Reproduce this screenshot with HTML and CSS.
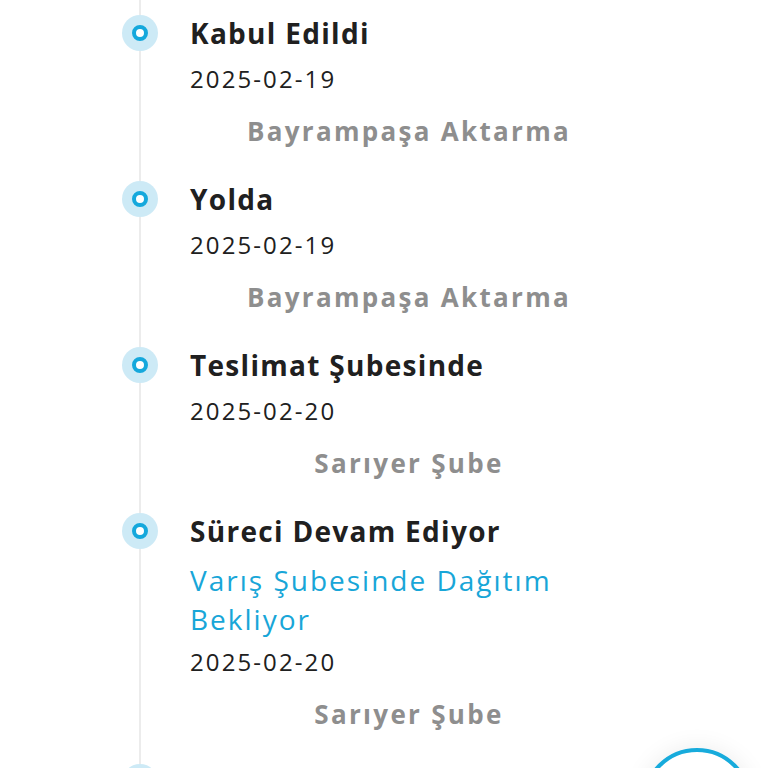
FILE: index.html
```html
<!DOCTYPE html>
<html lang="tr">
<head>
<meta charset="utf-8">
<title>Kargo Takip</title>
<link rel="stylesheet" href="styles.css">
</head>
<body>
<ul class="timeline">
  <li class="event">
    <span class="dot"></span>
    <div class="body">
      <h3 class="title">Kabul Edildi</h3>
      <p class="date">2025-02-19</p>
      <p class="place">Bayrampaşa Aktarma</p>
    </div>
  </li>
  <li class="event">
    <span class="dot"></span>
    <div class="body">
      <h3 class="title">Yolda</h3>
      <p class="date">2025-02-19</p>
      <p class="place">Bayrampaşa Aktarma</p>
    </div>
  </li>
  <li class="event">
    <span class="dot"></span>
    <div class="body">
      <h3 class="title">Teslimat Şubesinde</h3>
      <p class="date">2025-02-20</p>
      <p class="place">Sarıyer Şube</p>
    </div>
  </li>
  <li class="event">
    <span class="dot"></span>
    <div class="body">
      <h3 class="title">Süreci Devam Ediyor</h3>
      <p class="note">Varış Şubesinde Dağıtım Bekliyor</p>
      <p class="date">2025-02-20</p>
      <p class="place">Sarıyer Şube</p>
    </div>
  </li>
  <li class="event">
    <span class="dot"></span>
    <div class="body">
      <h3 class="title">Teslim Edildi</h3>
      <p class="date">2025-02-21</p>
      <p class="place">Sarıyer Şube</p>
    </div>
  </li>
</ul>
<button class="fab" type="button" aria-label="Destek"></button>
</body>
</html>
```
FILE: styles.css
```css
html, body {
  margin: 0;
  padding: 0;
  background: #ffffff;
  overflow: hidden;
}
body {
  font-family: "Open Sans", "Noto Sans", sans-serif;
  color: #222222;
  height: 768px;
}
.timeline {
  list-style: none;
  margin: 0 0 0 139px;
  padding: 10px 0 0 0;
  border-left: 2px solid #ececec;
}
.event {
  display: flex;
  align-items: flex-start;
  margin-bottom: 22px;
}
.dot {
  flex: none;
  width: 36px;
  height: 36px;
  margin: 5px 0 0 -19px;
  border-radius: 50%;
  background: #cdeaf6;
  display: flex;
  align-items: center;
  justify-content: center;
}
.dot::after {
  content: "";
  width: 8px;
  height: 8px;
  border: 4px solid #15a8dc;
  border-radius: 50%;
  background: #ffffff;
}
.body {
  margin-left: 32px;
  width: 438px;
}
.title {
  margin: 0;
  font-size: 28px;
  line-height: 46px;
  font-weight: 700;
  letter-spacing: 1.3px;
  color: #202020;
}
.date {
  margin: 0;
  font-size: 24px;
  line-height: 46px;
  font-weight: 400;
  letter-spacing: 2.1px;
  color: #202020;
}
.note {
  margin: 7px 0 0;
  font-size: 28px;
  line-height: 39px;
  font-weight: 500;
  letter-spacing: 2px;
  color: #18a6d8;
}
.place {
  margin: 6px 0 0;
  text-align: center;
  font-size: 26px;
  line-height: 46px;
  font-weight: 700;
  letter-spacing: 2.3px;
  color: #8e8e8e;
}
.fab {
  position: fixed;
  right: 16px;
  bottom: -90px;
  width: 110px;
  height: 110px;
  border-radius: 50%;
  border: 4px solid #17abdc;
  background: #ffffff;
  box-shadow: 0 0 24px rgba(0, 0, 0, 0.08);
  padding: 0;
}
```
